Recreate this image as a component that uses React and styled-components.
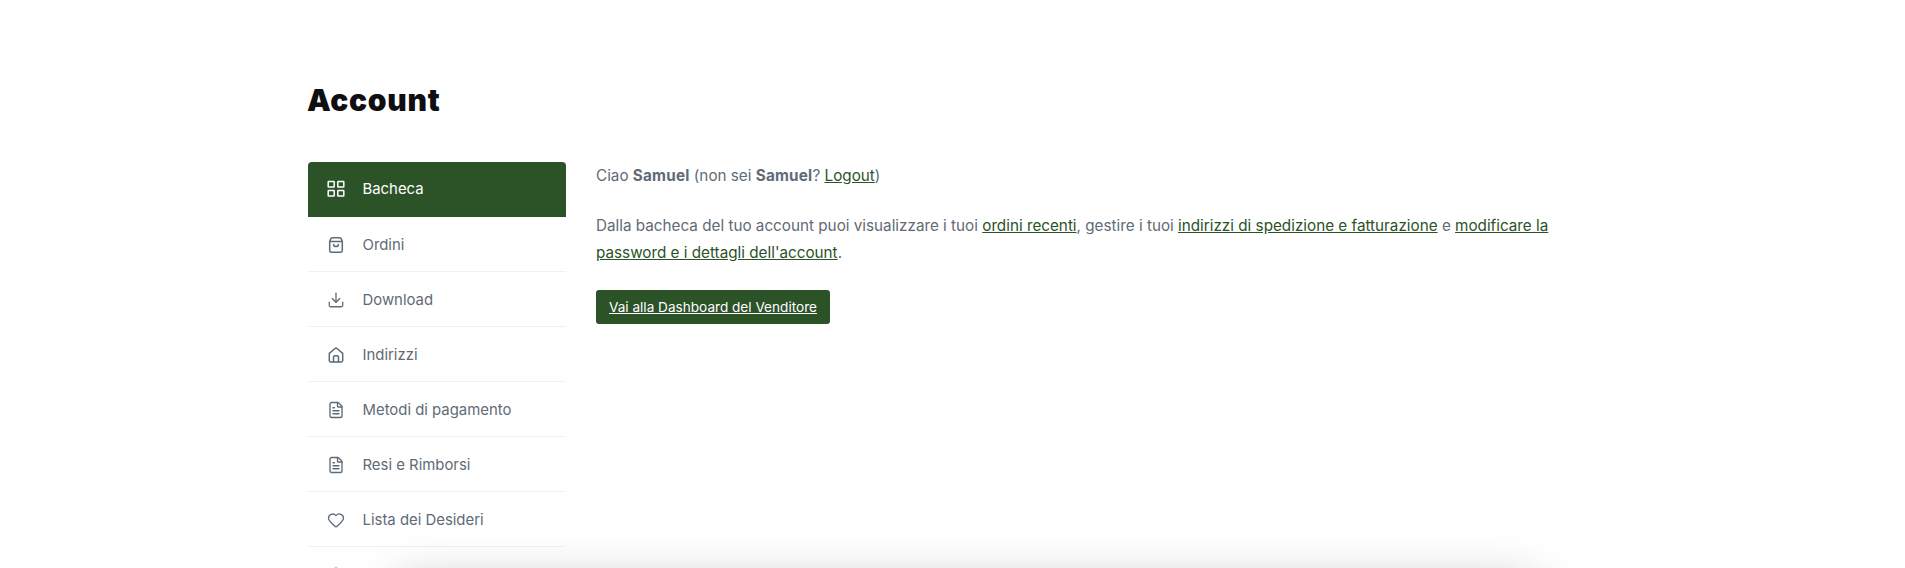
import React from "react";
import styled, { createGlobalStyle } from "styled-components";
import { Download, FileText, Heart, User } from "lucide-react";

const GlobalStyle = createGlobalStyle`
  html, body {
    margin: 0;
    height: 568px;
    overflow: hidden;
    background: #fff;
  }
  body {
    font-family: Inter, "Liberation Sans", sans-serif;
    color: #5f6b76;
  }
`;

const Page = styled.div`
  width: 1290px;
  padding: 83px 0 0 308px;
`;

const Title = styled.h1`
  margin: 0 0 44px -1px;
  font-size: 30px;
  line-height: 35px;
  font-weight: 900;
  letter-spacing: 0.7px;
  color: #0f0f12;
`;

const Columns = styled.div`
  display: flex;
  gap: 30px;
  align-items: flex-start;
`;

const Sidebar = styled.nav`
  width: 258px;
  flex: none;
`;

const NavItem = styled.a`
  display: flex;
  align-items: center;
  gap: 17.5px;
  height: 55px;
  box-sizing: border-box;
  padding: ${(p) => (p.$active ? "0" : "1px")} 0 0 19px;
  font-size: 14.9px;
  font-weight: 400;
  color: ${(p) => (p.$active ? "#fff" : "#5f6b76")};
  background: ${(p) => (p.$active ? "#2c5228" : "transparent")};
  border-radius: ${(p) => (p.$active ? "4px 4px 0 0" : "0")};
  border-bottom: 1px solid ${(p) => (p.$active ? "#2c5228" : "#f0f1f2")};
`;

const IconBox = styled.span`
  display: flex;
  align-items: center;
  justify-content: center;
  width: 18px;
  height: 18px;
  flex: none;
`;

const Content = styled.div`
  width: 960px;
  font-size: 15.25px;
  line-height: 27px;
`;

const Paragraph = styled.p`
  margin: 0 0 23px;
`;

const Strong = styled.strong`
  font-weight: 700;
  letter-spacing: 0.2px;
`;

const TextLink = styled.a`
  color: #2c5228;
  text-decoration: underline;
`;

const DashboardButton = styled.a`
  display: inline-block;
  margin-top: 1px;
  padding: 0 13px;
  height: 34px;
  line-height: 34px;
  font-size: 13.6px;
  color: #fff;
  background: #2c5228;
  border-radius: 3px;
  text-decoration: underline;
`;

// barra fissa sotto il bordo della finestra, si vede solo l'ombra
const FloatingBar = styled.div`
  position: fixed;
  left: 397px;
  width: 1138px;
  top: 585px;
  height: 60px;
  background: #fff;
  box-shadow: 0 0 50px rgba(0, 0, 0, 0.28);
`;

const GridIcon = () => (
  <svg width="18" height="18" viewBox="0 0 18 18" fill="none" stroke="currentColor" strokeWidth="1.5">
    <rect x="1.2" y="1.5" width="6" height="5.600" rx="0.4" />
    <rect x="10.8" y="1.5" width="6" height="5.600" rx="0.4" />
    <rect x="1.2" y="10.500" width="6" height="5.600" rx="0.4" />
    <rect x="10.8" y="10.500" width="6" height="5.600" rx="0.4" />
  </svg>
);

const BagIcon = () => (
  <svg width="18" height="18" viewBox="0 0 18 18" fill="none" stroke="currentColor" strokeWidth="1.5" strokeLinecap="round" strokeLinejoin="round">
    <path d="M5.200 1.800h7.600c.8 0 1.400.5 1.600 1.200l.9 2.600v9a1.600 1.600 0 0 1-1.600 1.600H4.300a1.600 1.600 0 0 1-1.600-1.600v-9l.9-2.600c.2-.7.8-1.200 1.600-1.200Z" />
    <path d="M2.900 5.600h12.200" />
    <path d="M6.600 8.600c.4 2.600 4.400 2.600 4.800 0" />
  </svg>
);

const HomeIcon = () => (
  <svg width="18" height="18" viewBox="0 0 18 18" fill="none" stroke="currentColor" strokeWidth="1.5" strokeLinecap="round" strokeLinejoin="round">
    <path d="M2.300 7.400 8 2.500a1.500 1.500 0 0 1 2 0l5.700 4.900v7.100a1.500 1.500 0 0 1-1.500 1.500H3.800a1.500 1.500 0 0 1-1.500-1.500Z" />
    <path d="M6.500 16v-4.800a1.500 1.500 0 0 1 1.500-1.500h2a1.500 1.500 0 0 1 1.500 1.500V16" />
  </svg>
);

const menu = [
  { label: "Bacheca", icon: <GridIcon />, active: true },
  { label: "Ordini", icon: <BagIcon /> },
  { label: "Download", icon: <Download size={22} strokeWidth={1.7} /> },
  { label: "Indirizzi", icon: <HomeIcon /> },
  { label: "Metodi di pagamento", icon: <FileText size={20} strokeWidth={1.8} /> },
  { label: "Resi e Rimborsi", icon: <FileText size={20} strokeWidth={1.8} /> },
  { label: "Lista dei Desideri", icon: <Heart size={20} strokeWidth={1.8} /> },
  { label: "Dettagli account", icon: <User size={20} strokeWidth={1.8} /> },
];

export default function App() {
  return (
    <>
      <GlobalStyle />
      <Page>
        <Title>Account</Title>
        <Columns>
          <Sidebar>
            {menu.map((item) => (
              <NavItem key={item.label} $active={item.active}>
                <IconBox>{item.icon}</IconBox>
                {item.label}
              </NavItem>
            ))}
          </Sidebar>
          <Content>
            <Paragraph>
              Ciao <Strong>Samuel</Strong> (non sei <Strong>Samuel</Strong>? <TextLink>Logout</TextLink>)
            </Paragraph>
            <Paragraph>
              Dalla bacheca del tuo account puoi visualizzare i tuoi <TextLink>ordini recenti</TextLink>, gestire i
              tuoi <TextLink>indirizzi di spedizione e fatturazione</TextLink> e{" "}
              <TextLink>modificare la password e i dettagli dell'account</TextLink>.
            </Paragraph>
            <DashboardButton>Vai alla Dashboard del Venditore</DashboardButton>
          </Content>
        </Columns>
      </Page>
      <FloatingBar />
    </>
  );
}
